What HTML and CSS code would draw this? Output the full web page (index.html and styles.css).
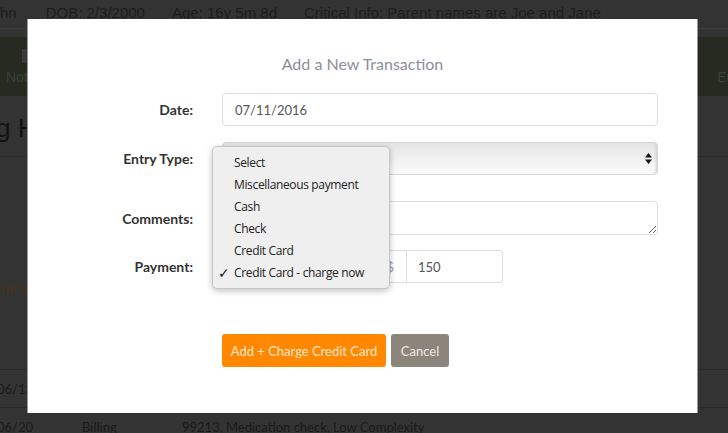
FILE: index.html
```html
<!DOCTYPE html>
<html>
<head>
<meta charset="utf-8">
<link rel="stylesheet" href="styles.css">
</head>
<body>
<div class="page">
  <div class="topbar">
    <span class="tb-name">hn</span>
    <span class="tb-item">DOB: 2/3/2000</span>
    <span class="tb-item">Age: 16y 5m 8d</span>
    <span class="tb-item">Critical Info: Parent names are Joe and Jane</span>
  </div>
  <div class="nav">
    <div class="nav-item nav-left"><span class="nav-icon"></span><span>Notes</span></div>
    <div class="nav-item nav-right"><span class="nav-icon"></span><span>Encounters</span></div>
  </div>
  <h1 class="heading">g History</h1>
  <div class="trans">transactions</div>
  <div class="table">
    <div class="trow"><span class="c-date">06/13</span></div>
    <div class="trow"><span class="c-date">06/20</span><span class="c-type">Billing</span><span class="c-desc">99213, Medication check, Low Complexity</span></div>
  </div>
</div>

<div class="modal">
  <h2 class="modal-title">Add a New Transaction</h2>
  <div class="form">
    <div class="frow gap16">
      <label class="flabel">Date:</label>
      <div class="control">07/11/2016</div>
    </div>
    <div class="frow gap26">
      <label class="flabel">Entry Type:</label>
      <div class="select">
        <svg class="sel-arrows" width="7" height="11" viewBox="0 0 7 11"><path d="M3.5 0 L7 4.5 L0 4.5 Z M0 6.5 L7 6.5 L3.5 11 Z" fill="#111"/></svg>
        <div class="menu">
          <div class="mi">Select</div>
          <div class="mi">Miscellaneous payment</div>
          <div class="mi">Cash</div>
          <div class="mi">Check</div>
          <div class="mi">Credit Card</div>
          <div class="mi checked"><span class="check">✓</span>Credit Card - charge now</div>
        </div>
      </div>
    </div>
    <div class="frow gap15">
      <label class="flabel">Comments:</label>
      <textarea class="textarea"></textarea>
    </div>
    <div class="frow">
      <label class="flabel">Payment:</label>
      <div class="igroup">
        <span class="addon">$</span>
        <span class="amount">150</span>
      </div>
    </div>
  </div>
  <div class="actions">
    <button class="btn btn-orange">Add + Charge Credit Card</button>
    <button class="btn btn-gray">Cancel</button>
  </div>
</div>
</body>
</html>
```
FILE: styles.css
```css
html, body {
  margin: 0;
  padding: 0;
}
body {
  width: 728px;
  height: 433px;
  overflow: hidden;
  background: #333333;
  position: relative;
  font-family: "Liberation Sans", Arial, sans-serif;
}
.page {
  width: 728px;
}
.topbar {
  height: 29px;
  border-bottom: 1px solid #3c3c3c;
  display: flex;
  align-items: center;
  padding-bottom: 3px;
  box-sizing: border-box;
  font-size: 15px;
  color: #1d1d1d;
  white-space: nowrap;
}
.tb-name {
  margin-right: 29px;
}
.tb-item {
  margin-right: 27px;
}
.nav {
  margin-top: 8px;
  height: 59px;
  background: #262a20;
  display: flex;
  justify-content: space-between;
  overflow: hidden;
}
.nav-item {
  display: flex;
  flex-direction: column;
  align-items: center;
  color: #3c4036;
  font-size: 14px;
  padding-top: 12px;
}
.nav-left {
  margin-left: 6px;
}
.nav-right {
  margin-right: -60px;
}
.nav-icon {
  width: 5px;
  height: 14px;
  background: #3a3a3a;
  margin-bottom: 6px;
}
.heading {
  margin: 17px 0 0 -4px;
  font-weight: normal;
  font-size: 26px;
  line-height: 30px;
  height: 43px;
  color: #121212;
  border-bottom: 1px solid #2c2c2c;
}
.trans {
  margin-top: 122px;
  margin-left: -3px;
  font-size: 14px;
  line-height: 18px;
  color: #4a3117;
}
.table {
  margin-top: 72px;
  font-family: Lato, sans-serif;
  font-size: 13px;
  color: #1a1a1a;
}
.trow {
  height: 37px;
  border-top: 1px solid #2a2a2a;
  display: flex;
  align-items: center;
  white-space: nowrap;
  position: relative;
}
.c-date {
  margin-left: -3px;
  width: 85px;
}
.c-type {
  width: 100px;
}

/* modal */
.modal {
  position: absolute;
  left: 27px;
  top: 19px;
  width: 671px;
  height: 394px;
  box-sizing: border-box;
  background: #ffffff;
  border-left: 1px solid #9a9a9a;
  border-right: 1px solid #9a9a9a;
  padding-top: 33px;
  font-family: Lato, "Open Sans", sans-serif;
}
.modal-title {
  margin: 0;
  text-align: center;
  font-size: 16px;
  line-height: 24px;
  font-weight: normal;
  color: #8d8e9a;
}
.form {
  margin-top: 17px;
}
.frow {
  display: flex;
  align-items: center;
  gap: 29px;
}
.gap16 { margin-bottom: 16px; }
.gap26 { margin-bottom: 26px; }
.gap15 { margin-bottom: 15px; }
.flabel {
  width: 165px;
  text-align: right;
  font-size: 14px;
  font-weight: bold;
  color: #333333;
}
.control {
  width: 436px;
  height: 33px;
  box-sizing: border-box;
  border: 1px solid #dddddd;
  border-radius: 4px;
  padding-left: 12px;
  display: flex;
  align-items: center;
  font-size: 13px;
  color: #555555;
}
.select {
  position: relative;
  width: 436px;
  height: 33px;
  box-sizing: border-box;
  border: 1px solid #d6d6d6;
  border-radius: 4px;
  background: linear-gradient(#e4e4e4, #f1f1f1 55%, #fafafa);
  box-shadow: inset -3px 0 3px -2px #cfcfcf;
}
.sel-arrows {
  position: absolute;
  right: 5px;
  top: 10px;
}
.menu {
  position: absolute;
  left: -11px;
  top: 3px;
  width: 178px;
  box-sizing: border-box;
  padding: 5px 0 4px;
  background: #efefef;
  border: 1px solid #c6c6c6;
  border-radius: 5px;
  box-shadow: 0 2px 6px rgba(0, 0, 0, 0.25);
  font-family: "Open Sans", sans-serif;
  font-size: 12px;
  letter-spacing: -0.35px;
  color: #222222;
  z-index: 2;
}
.mi {
  height: 22px;
  line-height: 22px;
  padding-left: 21px;
  position: relative;
  white-space: nowrap;
}
.check {
  position: absolute;
  left: 5px;
  top: 0;
  font-family: "DejaVu Sans", sans-serif;
  font-size: 14px;
  font-weight: bold;
}
.textarea {
  width: 436px;
  height: 34px;
  box-sizing: border-box;
  border: 1px solid #dddddd;
  border-radius: 4px;
  margin: 0;
  padding: 0;
  resize: both;
  font-family: inherit;
  outline: none;
}
.igroup {
  display: flex;
  height: 33px;
  width: 281px;
}
.addon {
  width: 185px;
  box-sizing: border-box;
  border: 1px solid #dddddd;
  border-radius: 4px 0 0 4px;
  display: flex;
  align-items: center;
  justify-content: flex-end;
  padding-right: 12px;
  font-size: 13px;
  color: #999999;
}
.amount {
  width: 96px;
  box-sizing: border-box;
  border: 1px solid #dddddd;
  border-left: none;
  border-radius: 0 4px 4px 0;
  display: flex;
  align-items: center;
  padding-left: 11px;
  font-size: 13px;
  color: #555555;
}
.actions {
  margin-top: 51px;
  margin-left: 194px;
  display: flex;
  gap: 5px;
}
.btn {
  height: 33px;
  border: none;
  border-radius: 3px;
  font-family: Lato, sans-serif;
  font-size: 13px;
  padding: 0;
  margin: 0;
  white-space: nowrap;
}
.btn-orange {
  width: 164px;
  background: #ff8800;
  color: #ffe8cf;
}
.btn-gray {
  width: 58px;
  background: #8c857c;
  color: #eeeae6;
}
```
